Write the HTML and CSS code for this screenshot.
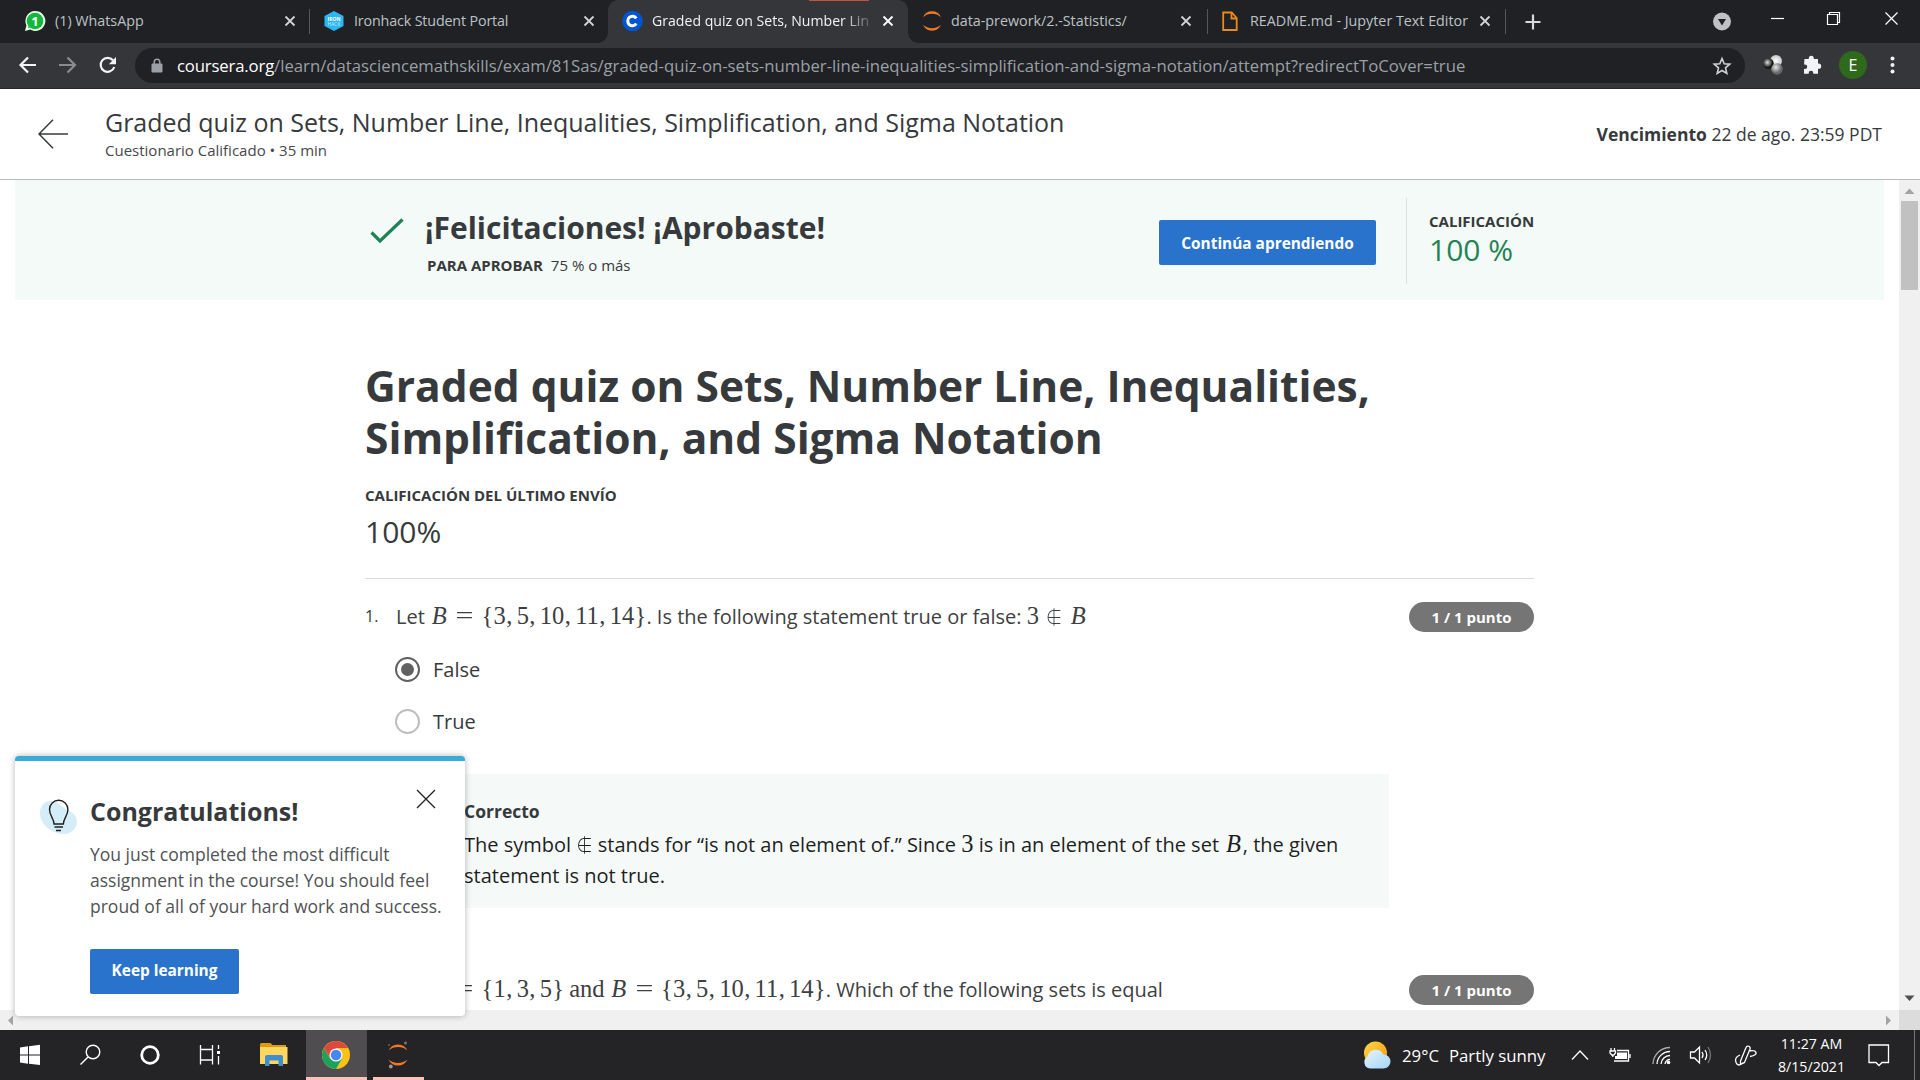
FILE: index.html
```html
<!DOCTYPE html>
<html lang="es">
<head>
<meta charset="utf-8">
<title>Graded quiz on Sets, Number Line</title>
<link rel="stylesheet" href="styles.css">
</head>
<body>
<div class="tabstrip">
  <div class="tab first">
    <svg class="fav" viewBox="0 0 22 22"><path d="M1 21l1.4-5.6A10 10 0 1 1 6.300 19.600z" fill="#e9fbe9"/><circle cx="11" cy="11" r="8.300" fill="#12b83c"/><path d="M4 18l1-4 3 3z" fill="#12b83c"/><text x="11" y="15.500" class="wa-num">1</text></svg>
    <span class="tab-title">(1) WhatsApp</span>
    <svg class="close" viewBox="0 0 12 12"><path d="M1.500 1.500l9 9M10.500 1.500l-9 9"/></svg>
  </div>
  <div class="tab sep second">
    <svg class="fav" viewBox="0 0 22 22"><path d="M11 1l9.500 5v10L11 21l-9.500-5V6z" fill="#2cb6f4"/><text x="11" y="10.500" class="ih">IRON</text><text x="11" y="15.500" class="ih thin">HACK</text></svg>
    <span class="tab-title t2">Ironhack Student Portal</span>
    <svg class="close" viewBox="0 0 12 12"><path d="M1.500 1.500l9 9M10.500 1.500l-9 9"/></svg>
  </div>
  <div class="tab active">
    <svg class="fav" viewBox="0 0 22 22"><circle cx="11.500" cy="11" r="10.300" fill="#0056d2"/><path d="M15.300 8.300A4.700 4.700 0 1 0 15.300 13.700" fill="none" stroke="#fff" stroke-width="3"/></svg>
    <span class="tab-title t3">Graded quiz on Sets, Number Lin</span>
    <svg class="close" viewBox="0 0 12 12"><path d="M1.500 1.500l9 9M10.500 1.500l-9 9"/></svg>
    <i class="alert"></i>
  </div>
  <div class="tab">
    <svg class="fav" viewBox="0 0 22 22"><path d="M2 7.200A9.800 9.800 0 0 1 20 7.200 13.500 13.500 0 0 0 2 7.200zM2 14.800A9.800 9.800 0 0 0 20 14.800 13.500 13.500 0 0 1 2 14.800z" fill="#f37726"/></svg>
    <span class="tab-title t4">data-prework/2.-Statistics/</span>
    <svg class="close" viewBox="0 0 12 12"><path d="M1.500 1.500l9 9M10.500 1.500l-9 9"/></svg>
  </div>
  <div class="tab sep last">
    <svg class="fav" viewBox="0 0 22 22"><path d="M3.200 2.500h8.500l5 5.500v12h-13.500zM11.500 2.500v6h5.200" fill="none" stroke="#ea8b1c" stroke-width="1.800"/></svg>
    <span class="tab-title t4">README.md - Jupyter Text Editor</span>
    <svg class="close" viewBox="0 0 12 12"><path d="M1.500 1.500l9 9M10.500 1.500l-9 9"/></svg>
  </div>
  <svg class="plus" viewBox="0 0 16 16"><path d="M8 .5v15M.5 8h15"/></svg>
  <svg class="controls" viewBox="0 0 220 43"><circle cx="22" cy="21.500" r="9" fill="#bfc1c5"/><path d="M18 19h8l-4 6.500z" fill="#202124"/><path d="M71 18.500h13" stroke="#fff" stroke-width="1.200"/><path d="M127.500 14.500h10v10h-10zM129.500 14v-1.500h10v10H138" fill="none" stroke="#fff" stroke-width="1.200"/><path d="M185.500 12.500l12 12M197.500 12.500l-12 12" stroke="#fff" stroke-width="1.200"/></svg>
</div>
<div class="toolbar">
  <svg class="nav" viewBox="0 0 135 46"><g fill="none" stroke-width="2.200"><path d="M36 22H21M28 14.500L20.500 22l7.500 7.500" stroke="#f1f3f4"/><path d="M59 22h15M67.500 14.500L75 22l-7.500 7.500" stroke="#8a8c90"/><path d="M113 17.300A7 7 0 1 0 114.300 24" stroke="#f1f3f4"/></g><path d="M116 14v7.200h-7.200z" fill="#f1f3f4"/></svg>
  <div class="omnibox">
    <svg class="lock" viewBox="0 0 12 16"><rect x=".5" y="5.500" width="11" height="9" rx="1.200" fill="#9aa0a6"/><path d="M3.200 6V4a2.800 2.800 0 0 1 5.600 0v2" fill="none" stroke="#9aa0a6" stroke-width="1.500"/></svg>
    <span class="url"><b>coursera.org</b>/learn/datasciencemathskills/exam/81Sas/graded-quiz-on-sets-number-line-inequalities-simplification-and-sigma-notation/attempt?redirectToCover=true</span>
    <svg class="star" viewBox="0 0 20 20"><path d="M10 2.500l2.200 5.200 5.600.5-4.300 3.700 1.300 5.500L10 14.500l-4.800 2.900 1.300-5.500-4.300-3.700 5.600-.5z"/></svg>
  </div>
  <svg class="ext" viewBox="0 0 175 46">
    <defs><radialGradient id="bw"><stop offset="0" stop-color="#fff"/><stop offset="1" stop-color="#c5c5c5"/></radialGradient><radialGradient id="bb" cx=".4" cy=".4"><stop offset="0" stop-color="#ddd"/><stop offset="1" stop-color="#111"/></radialGradient><radialGradient id="bg" cx=".4" cy=".35"><stop offset="0" stop-color="#e8e8e8"/><stop offset="1" stop-color="#666"/></radialGradient></defs>
    <circle cx="31" cy="18" r="6" fill="url(#bw)"/><circle cx="23.500" cy="20.500" r="5.200" fill="url(#bb)"/><circle cx="32" cy="26" r="5.800" fill="url(#bg)"/>
    <path d="M59.500 16h4.300v-.8a2.500 2.500 0 0 1 5 0v.8h4.200v4.600h.6a2.500 2.500 0 0 1 0 5.200h-.6v5h-4.700v-.8a2.300 2.300 0 0 0-4.600 0v.8H59v-4.700h.9a2.300 2.300 0 0 0 0-4.700H59z" fill="#f1f3f4"/>
    <circle cx="108" cy="22" r="14" fill="#2f6a1c"/><text x="108" y="27.500" class="avatar">E</text>
    <g fill="#f1f3f4"><circle cx="147.500" cy="15.500" r="2"/><circle cx="147.500" cy="22" r="2"/><circle cx="147.500" cy="28.500" r="2"/></g>
  </svg>
</div>

<header class="header">
  <svg class="back" viewBox="0 0 30 30"><path d="M30 15H1.500M15 .8L1 15l14 14.200"/></svg>
  <div class="header-text">
    <div class="header-title">Graded quiz on Sets, Number Line, Inequalities, Simplification, and Sigma Notation</div>
    <div class="header-sub">Cuestionario Calificado • 35 min</div>
  </div>
  <div class="due"><b>Vencimiento</b> 22 de ago. 23:59 PDT</div>
</header>

<div class="viewport">
  <main class="page">
    <section class="banner">
      <svg class="check" viewBox="0 0 34 26"><path d="M1.500 14.500l8.500 8.500L32.500 1.500"/></svg>
      <div class="banner-text">
        <div class="banner-title">¡Felicitaciones! ¡Aprobaste!</div>
        <div class="banner-sub"><b>PARA APROBAR</b><span>75 % o más</span></div>
      </div>
      <button class="btn continue">Continúa aprendiendo</button>
      <div class="grade"><div class="label">CALIFICACIÓN</div><div class="grade-num">100 %</div></div>
    </section>
    <div class="content">
      <h1>Graded quiz on Sets, Number Line, Inequalities,<br>Simplification, and Sigma Notation</h1>
      <div class="label last-label">CALIFICACIÓN DEL ÚLTIMO ENVÍO</div>
      <div class="last-grade">100%</div>
      <div class="question q1">
        <div class="num">1.</div>
        <div class="q-body">
          <div class="prompt">Let <span class="math"><i class="v">B</i><i class="eq">=</i><i class="br">{</i>3<i class="c">,</i>5<i class="c">,</i>10<i class="c">,</i>11<i class="c">,</i>14<i class="br">}</i></span>. Is the following statement true or false: <span class="math">3<i class="in rel">∉</i><i class="v">B</i></span></div>
          <div class="option"><span class="radio on"></span><span>False</span></div>
          <div class="option"><span class="radio"></span><span>True</span></div>
          <div class="feedback">
            <div class="fb-title">Correcto</div>
            <div class="fb-text">The symbol <span class="math"><i class="in">∉</i></span> stands for “is not an element of.” Since <span class="math">3</span> is in an element of the set <span class="math"><i class="v">B</i></span>, the given<br>statement is not true.</div>
          </div>
        </div>
        <div class="pill">1 / 1 punto</div>
      </div>
      <div class="question q2">
        <div class="num">2.</div>
        <div class="q-body">
          <div class="prompt">Let <span class="math"><i class="v">A</i><i class="eq">=</i><i class="br">{</i>1<i class="c">,</i>3<i class="c">,</i>5<i class="br">}</i><i class="and">and</i><i class="v">B</i><i class="eq">=</i><i class="br">{</i>3<i class="c">,</i>5<i class="c">,</i>10<i class="c">,</i>11<i class="c">,</i>14<i class="br">}</i></span>. Which of the following sets is equal</div>
        </div>
        <div class="pill">1 / 1 punto</div>
      </div>
    </div>
  </main>
  <div class="vscroll">
    <svg viewBox="0 0 21 21"><path d="M5.500 14L10.500 8.500l5 5.500z" fill="#a3a3a3"/></svg>
    <div class="thumb"></div>
    <svg class="down" viewBox="0 0 21 21"><path d="M5.500 6.500l5 5.500 5-5.500z" fill="#505050"/></svg>
  </div>
</div>
<div class="hscroll">
  <svg viewBox="0 0 21 20"><path d="M13 5.500L8 10.500l5 5z" fill="#a3a3a3"/></svg>
  <svg class="right" viewBox="0 0 21 20"><path d="M8 5.500l5 5-5 5z" fill="#a3a3a3"/></svg>
  <div class="corner"></div>
</div>

<aside class="popup">
  <svg class="bulb" viewBox="0 0 40 38"><path d="M1 15C1 7 6 2.500 13 3c6 .5 8 5 14 8 7 3.500 11 7 11 12.500C38 31 32 36.500 24 36 12 35.500 1 26 1 15z" fill="#d5edf8"/><path d="M15 26c0-6-4.500-8-4.500-14.500a9.200 9.200 0 0 1 18.400 0c0 6.500-4.500 8.500-4.500 14.500zM15.500 29h8.500M17 32.500h5" fill="none" stroke="#1f1f1f" stroke-width="1.400"/></svg>
  <div class="popup-body">
    <div class="popup-title">Congratulations!</div>
    <p>You just completed the most difficult<br>assignment in the course! You should feel<br>proud of all of your hard work and success.</p>
    <button class="btn keep">Keep learning</button>
  </div>
  <svg class="popup-close" viewBox="0 0 20 20"><path d="M1 1l18 18M19 1L1 19"/></svg>
</aside>

<footer class="taskbar">
  <svg class="task-icons" viewBox="0 0 440 50">
    <rect x="306" width="61" height="50" fill="#4f4d50"/><rect x="306" y="47" width="61" height="3" fill="#ffc0b5"/><rect x="373" y="47" width="51" height="3" fill="#ffc0b5"/>
    <path d="M20 17.500l8-1.200v8.200h-8zM29 16.200l11-1.500v9.800H29zM20 25.500h8v8.200l-8-1.200zM29 25.500h11V35l-11-1.300z" fill="#fff"/>
    <circle cx="93" cy="22" r="6.800" fill="none" stroke="#fff" stroke-width="1.400"/><path d="M88 27l-7.500 7.500" stroke="#fff" stroke-width="1.500"/>
    <circle cx="150" cy="25" r="8.300" fill="none" stroke="#fff" stroke-width="2.800"/>
    <path d="M200.500 15v4.500h12V15M200.500 34.500V30h12v4.500M200.500 19.500v10.500M212.500 19.500v10.500M218.500 15v4M218.500 26v8.500" fill="none" stroke="#fff" stroke-width="1.300"/><rect x="217" y="21" width="3" height="3" fill="#fff"/>
    <path d="M260 14.500q0-1.500 1.500-1.500h9l2 2H286v5h-26z" fill="#dd9b0e"/><path d="M260 17h27.500v17H260z" fill="#ffd75e"/><path d="M265 36V27q0-2 2-2h14q2 0 2 2v9h-4.500v-5.500h-9V36z" fill="#3e8ed0"/>
    <circle cx="336" cy="25" r="14" fill="#fbc116"/><path d="M323.900 18A14 14 0 0 0 336 39L342 28.500 336 25 329.900 28.500z" fill="#1da15f"/><path d="M323.900 18A14 14 0 0 1 348.100 18H336v7l-6 3z" fill="#dc4a3d"/><circle cx="336" cy="25" r="6.600" fill="#f4f4f4"/><circle cx="336" cy="25" r="5.200" fill="#4587f3"/>
    <path d="M388.500 20.500a10.500 10.500 0 0 1 19 0 15 15 0 0 0-19 0zM388.500 29.500a10.500 10.500 0 0 0 19 0 15 15 0 0 1-19 0z" fill="#f37726"/><circle cx="405.500" cy="13" r="1.500" fill="#777"/><circle cx="390.800" cy="36.500" r="1.900" fill="#999"/><circle cx="389" cy="15" r="1" fill="#666"/>
  </svg>
  <svg class="weather" viewBox="0 0 28 28"><defs><linearGradient id="sun" x2="1" y2="1"><stop offset="0" stop-color="#ffd94a"/><stop offset="1" stop-color="#f8930c"/></linearGradient><linearGradient id="cl" x2="1" y2="1"><stop offset="0" stop-color="#e6f5ff"/><stop offset="1" stop-color="#a4d4f7"/></linearGradient></defs><circle cx="12.500" cy="12" r="11.500" fill="url(#sun)"/><path d="M7 27.500a6.500 6.500 0 0 1-2.500-12 8.500 8.500 0 0 1 16-2 7 7 0 0 1 0 14z" fill="url(#cl)"/></svg>
  <div class="temp"><span>29°C</span><span>Partly sunny</span></div>
  <svg class="tray" viewBox="0 0 200 50"><g fill="none" stroke="#fff" stroke-width="1.300">
    <path d="M12 29.500l8-8.500 8 8.500"/>
    <path d="M57 20.500h11.500v10.500H54M70 24v4M51 18v3M54.500 18v3M50 21h5.500v2l-1.700 2h-2L50 23zM52.800 25v2"/>
    <path d="M93 34A17 17 0 0 1 110 17.500" stroke="#aaa"/><path d="M97 34a13 13 0 0 1 13-12.500M101 34a9 9 0 0 1 9-8.500M105 34a5 5 0 0 1 5-4.500"/>
    <path d="M130.500 22h4l5-5v16l-5-5h-4zM142 22q2 3 0 6M145 20q3.500 5 0 10"/><path d="M148 17q5 8 0 16" stroke="#777"/>
    <path d="M180.500 31l5.500-13.500a2 2 0 0 1 4 1.500l-5.500 13.500-4 2zM180 25q-6 2.500-4 7.500t7.500 0M189 21q6-1 7 1.500t-6 4"/></g><path d="M57 22.500h10v6.500H55v-3h2z" fill="#fff"/><circle cx="108.500" cy="32.500" r="1.800" fill="#fff"/></svg>
  <div class="clock"><span>11:27 AM</span><span>8/15/2021</span></div>
  <svg class="notif" viewBox="0 0 24 24"><path d="M2 2h19.500v17.500h-6.500l-3 3-3-3H2z"/></svg>
  <div class="peek"></div>
</footer>
</body>
</html>
```
FILE: styles.css
```css
* { box-sizing: border-box; }
body {
  margin: 0; width: 1920px; height: 1080px; overflow: hidden; position: relative;
  display: flex; flex-direction: column;
  font-family: "Open Sans", sans-serif; color: #373a3c; background: #fff;
}
svg { display: block; flex: none; }

/* browser chrome */
.tabstrip { height: 43px; background: #202124; display: flex; align-items: center; }
.tab { position: relative; width: 299px; height: 43px; padding: 0 15px 2px 13px; display: flex; align-items: center; gap: 9px; color: #bdc1c6; font-size: 14.300px; }
.tab.first { width: 309px; padding-left: 24px; padding-right: 13px; }
.tab.second { padding-left: 14px; padding-right: 13px; }
.tab.active { width: 300px; padding-right: 14px; background: #35363a; border-radius: 10px 10px 0 0; color: #f1f3f4; }
.tab.active::before, .tab.active::after { content: ""; position: absolute; bottom: 0; width: 10px; height: 10px; }
.tab.active::before { left: -10px; background: radial-gradient(circle at 0 0, #202124 9.500px, #35363a 10px); }
.tab.active::after { right: -10px; background: radial-gradient(circle at 100% 0, #202124 9.500px, #35363a 10px); }
.tab.sep::before, .tab.last::after { content: ""; position: absolute; left: 0; top: 9px; width: 1px; height: 25px; background: #55575b; }
.tab.last::after { left: auto; right: 0; }
.fav { width: 22px; height: 22px; }
.wa-num { font: bold 13px "Open Sans", sans-serif; fill: #fff; text-anchor: middle; }
.ih { font: bold 5px "Open Sans", sans-serif; fill: #fff; text-anchor: middle; }
.ih.thin { font-weight: 400; opacity: .7; }
.tab-title { flex: 1; min-width: 0; white-space: nowrap; }
.t2 { letter-spacing: -.150px; }
.t3 { font-size: 14.100px; -webkit-mask-image: linear-gradient(90deg, #000 190px, transparent 225px); mask-image: linear-gradient(90deg, #000 190px, transparent 225px); }
.t4 { margin-left: -1px; }
.close { width: 12px; height: 12px; fill: none; stroke: #d0d3d6; stroke-width: 1.800; }
.active .close { stroke: #fff; }
.alert { position: absolute; left: 201px; top: 0; width: 60px; height: 1px; background: #c5533a; }
.plus { width: 16px; height: 16px; margin-left: 19px; stroke: #d8dadd; stroke-width: 2.200; }
.controls { width: 220px; height: 43px; margin-left: auto; }
.toolbar { height: 46px; background: #35363a; border-bottom: 1px solid #27282b; display: flex; align-items: flex-start; }
.nav { width: 135px; height: 46px; }
.omnibox { width: 1610px; height: 35px; margin-top: 5px; padding: 0 13px 0 16px; border-radius: 18px; background: #202124; display: flex; align-items: center; }
.lock { width: 12px; height: 16px; }
.url { flex: 1; margin-left: 14px; font-size: 16.730px; color: #9aa0a6; white-space: nowrap; }
.url b { font-weight: 400; color: #fff; letter-spacing: -.160px; }
.star { width: 20px; height: 20px; fill: none; stroke: #d0d3d6; stroke-width: 1.600; }
.ext { width: 175px; height: 46px; }
.avatar { font: 16px "Open Sans", sans-serif; fill: #fff; text-anchor: middle; }

/* course header */
.header { height: 91px; border-bottom: 1px solid #b9bcbc; padding: 0 38px 0 38px; display: flex; align-items: center; }
.back { width: 30px; height: 30px; fill: none; stroke: #373a3c; stroke-width: 1.500; }
.header-text { margin-left: 37px; flex: 1; }
.header-title { font-size: 25px; line-height: 32px; margin-top: -1px; letter-spacing: -.010px; }
.header-sub { font-size: 15px; line-height: 22px; margin-top: 1px; color: #46494b; }
.due { font-size: 17.500px; }

/* scroll area */
.viewport { height: 830px; display: flex; overflow: hidden; }
.page { flex: 1; height: 830px; overflow: hidden; padding: 0 15px; }
.vscroll { width: 21px; background: #f0f0f0; display: flex; flex-direction: column; align-items: center; }
.vscroll svg { width: 21px; height: 21px; }
.vscroll .down { margin-top: auto; }
.thumb { width: 17px; height: 89px; background: #c1c1c1; }
.hscroll { height: 20px; background: #f0f0f0; display: flex; }
.hscroll svg { width: 21px; height: 20px; }
.hscroll .right { margin-left: auto; }
.corner { width: 21px; background: #dcdcdc; }

.banner { height: 120px; background: #f3faf7; padding-left: 355px; display: flex; align-items: flex-start; }
.check { width: 34px; height: 26px; margin-top: 38px; fill: none; stroke: #1f8354; stroke-width: 3.200; }
.banner-text { width: 755px; padding: 28px 0 0 21px; }
.banner-title { font-size: 30px; line-height: 40px; font-weight: 700; letter-spacing: -.020px; }
.banner-sub { font-size: 15px; line-height: 22px; padding: 6px 0 0 2px; display: flex; gap: 8px; }
.btn { border: 0; border-radius: 2px; background: #2a73cc; color: #fff; font: 700 15.400px "Open Sans", sans-serif; padding: 0; height: 45px; }
.continue { width: 217px; margin-top: 40px; padding-top: 1px; }
.grade { margin: 18px 0 0 30px; height: 86px; padding: 12px 0 0 22px; border-left: 1px solid #dbe0e0; }
.label { font-size: 15px; line-height: 22px; font-weight: 700; }
.grade-num { font-size: 30px; line-height: 36px; color: #1f8354; }

.content { width: 1169px; margin-left: 350px; }
h1 { margin: 60px 0 0; font-size: 42.500px; line-height: 52px; font-weight: 700; }
.last-label { margin-top: 20px; }
.last-grade { font-size: 30px; line-height: 40px; margin-top: 6px; height: 67px; border-bottom: 1px solid #d9dbdb; }
.question { display: flex; align-items: flex-start; }
.q1 { margin-top: 21px; }
.q2 { margin-top: 65px; }
.num { width: 31px; font-size: 16px; line-height: 32px; }
.q-body { width: 1013px; }
.prompt { font-size: 20px; line-height: 32px; height: 32px; padding-top: 1px; white-space: nowrap; color: #3d4042; }
.pill { width: 125px; height: 30px; margin: 2px 0 0 auto; border-radius: 15px; background: #757575; color: #fff; font-size: 15px; font-weight: 700; line-height: 30px; text-align: center; }
.option { display: flex; align-items: center; height: 52px; font-size: 20px; line-height: 24px; gap: 13px; }
.option span + span { padding-top: 2px; }
.prompt + .option { margin-top: 11px; }
.radio { width: 25px; height: 25px; margin-left: -1px; border: 2px solid #bdbdbd; border-radius: 50%; display: grid; place-items: center; }
.radio.on { border-color: #616161; }
.radio.on::after { content: ""; width: 13px; height: 13px; border-radius: 50%; background: #616161; }
.feedback { width: 993px; height: 134px; margin-top: 27px; padding: 22px 0 0 68px; background: #f5faf9; color: #1f1f1f; }
.fb-title { font-size: 17.500px; line-height: 30px; font-weight: 700; color: #373a3c; }
.fb-text { font-size: 20px; line-height: 31.300px; margin-top: 3px; }

/* typeset formulas: each symbol sits in a box of fixed advance */
.math { font: 24.500px/1 "Liberation Serif", serif; }
.math i { display: inline-block; font-style: normal; text-align: center; line-height: 1; }
.math .v { width: .759em; font-style: italic; }
.math .eq { width: .778em; margin: 0 .2778em; transform: scaleX(1.300); }
.math .br { width: .5em; }
.math .c { width: .445em; text-align: left; padding-left: .02em; }
.math .in { display: inline-flex; justify-content: center; width: 16.300px; font: 300 17px/17px "Noto Sans CJK JP", sans-serif; transform: scaleY(1.200); }
.math .rel { margin: 0 6.800px; }
.math .and { margin: 0 .2em; }

/* message card */
.popup { position: absolute; left: 15px; top: 756px; width: 450px; height: 260px; border-top: 5px solid #3aaad9; border-radius: 4px; background: #fff; box-shadow: 0 0 6px rgba(0,0,0,.3); padding: 0 30px 0 24px; display: flex; align-items: flex-start; }
.bulb { width: 40px; height: 38px; margin-top: 37px; }
.popup-body { flex: 1; margin-left: 11px; white-space: nowrap; }
.popup-title { margin-top: 33px; font-size: 25px; line-height: 34px; font-weight: 700; }
.popup p { margin: 13px 0 0; font-size: 17.500px; line-height: 26px; color: #505355; }
.keep { width: 149px; margin-top: 30px; padding-bottom: 2px; }
.popup-close { position: absolute; left: 401px; top: 28px; width: 20px; height: 20px; fill: none; stroke: #222; stroke-width: 1.300; }

/* taskbar */
.taskbar { height: 50px; background: #242325; color: #fff; display: flex; align-items: center; }
.task-icons { width: 440px; height: 50px; }
.weather { width: 28px; height: 28px; margin-left: 923px; }
.temp { margin-left: 11px; width: 158px; padding-top: 1px; font-size: 16.800px; display: flex; gap: 10px; white-space: nowrap; }
.tray { width: 200px; height: 50px; }
.clock { width: 103px; font-size: 14.200px; line-height: 23px; display: flex; flex-direction: column; align-items: center; }
.notif { width: 24px; height: 24px; margin-left: 4px; fill: none; stroke: #fff; stroke-width: 1.300; }
.peek { width: 1px; height: 50px; margin-left: 23px; background: #77767a; }
```
